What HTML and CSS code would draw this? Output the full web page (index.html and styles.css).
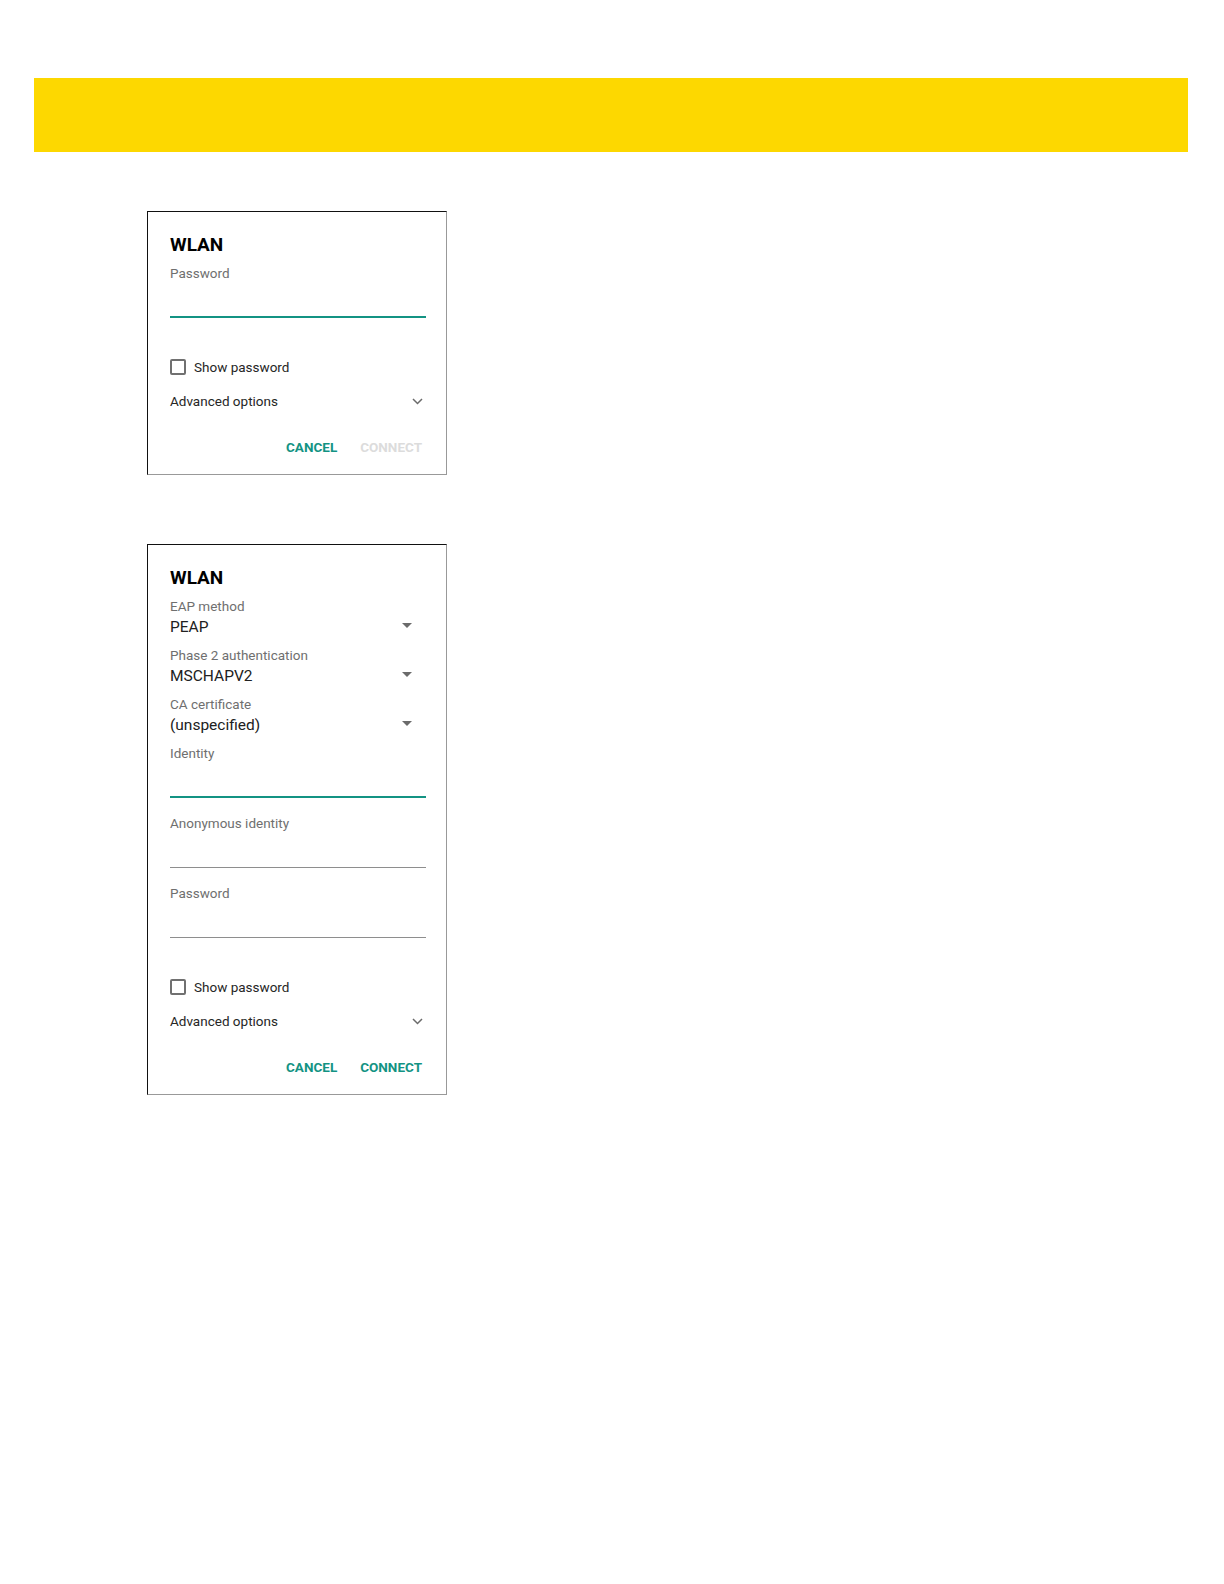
FILE: index.html
```html
<!DOCTYPE html>
<html lang="en">
<head>
  <meta charset="UTF-8">
  <meta name="viewport" content="width=device-width, initial-scale=1.0">
  <title>WLAN</title>
  <link rel="stylesheet" href="styles.css">
</head>
<body>
  <div class="banner"></div>

  <!-- simple password network -->
  <div class="dialog first">
    <div class="title">WLAN</div>
    <div class="field">
      <div class="label">Password</div>
      <div class="input focus"></div>
    </div>
    <div class="check-row">
      <span class="checkbox"></span>
      <span>Show password</span>
    </div>
    <div class="adv-row">
      <span>Advanced options</span>
      <svg class="chevron" width="11" height="7" viewBox="0 0 11 7"><path d="M1 1 L5.5 5.5 L10 1" fill="none" stroke="#6b6b6b" stroke-width="1.5"/></svg>
    </div>
    <div class="actions">
      <span class="btn">CANCEL</span>
      <span class="btn disabled">CONNECT</span>
    </div>
  </div>

  <!-- enterprise network -->
  <div class="dialog">
    <div class="title">WLAN</div>
    <div class="select">
      <div class="label">EAP method</div>
      <div class="value"><span>PEAP</span><svg class="caret" width="10" height="5" viewBox="0 0 10 5"><path d="M0 0 H10 L5 5 Z" fill="#6b6b6b"/></svg></div>
    </div>
    <div class="select">
      <div class="label">Phase 2 authentication</div>
      <div class="value"><span>MSCHAPV2</span><svg class="caret" width="10" height="5" viewBox="0 0 10 5"><path d="M0 0 H10 L5 5 Z" fill="#6b6b6b"/></svg></div>
    </div>
    <div class="select">
      <div class="label">CA certificate</div>
      <div class="value"><span>(unspecified)</span><svg class="caret" width="10" height="5" viewBox="0 0 10 5"><path d="M0 0 H10 L5 5 Z" fill="#6b6b6b"/></svg></div>
    </div>
    <div class="field">
      <div class="label">Identity</div>
      <div class="input focus"></div>
    </div>
    <div class="field">
      <div class="label">Anonymous identity</div>
      <div class="input"></div>
    </div>
    <div class="field">
      <div class="label">Password</div>
      <div class="input"></div>
    </div>
    <div class="check-row">
      <span class="checkbox"></span>
      <span>Show password</span>
    </div>
    <div class="adv-row">
      <span>Advanced options</span>
      <svg class="chevron" width="11" height="7" viewBox="0 0 11 7"><path d="M1 1 L5.5 5.5 L10 1" fill="none" stroke="#6b6b6b" stroke-width="1.5"/></svg>
    </div>
    <div class="actions">
      <span class="btn">CANCEL</span>
      <span class="btn">CONNECT</span>
    </div>
  </div>
</body>
</html>
```

FILE: styles.css
```css
body {
  margin: 0;
  padding-top: 78px;
  font-family: Roboto, "Liberation Sans", sans-serif;
  background: #fff;
  color: #212121;
}
.banner {
  margin-left: 34px;
  width: 1154px;
  height: 74px;
  background: #fdd800;
}
.dialog {
  box-sizing: border-box;
  width: 300px;
  margin: 69px 0 0 147px;
  padding: 21px 20px 17px 22px;
  border: 1px solid #999;
  border-top-color: #111;
  border-left-color: #111;
}
.dialog.first {
  margin-top: 59px;
}
.title {
  font-size: 19px;
  font-weight: bold;
  line-height: 24px;
  color: #000;
  margin-bottom: 6px;
}
.label {
  font-size: 13.5px;
  line-height: 20px;
  color: #6f6f6f;
}
.select {
  margin-bottom: 7px;
}
.value {
  display: flex;
  justify-content: space-between;
  align-items: center;
  font-size: 15.5px;
  line-height: 22px;
  color: #212121;
}
.caret {
  margin-right: 14px;
  margin-bottom: 3px;
}
.field {
  margin-bottom: 15px;
}
.input {
  height: 34px;
  border-bottom: 1px solid #8e8e8e;
}
.input.focus {
  height: 33px;
  border-bottom: 2px solid #139383;
}
/* top margin collapses with the field's 15px below */
.check-row {
  display: flex;
  align-items: center;
  margin-top: 37px;
  margin-bottom: 10px;
  font-size: 13.5px;
  line-height: 24px;
  color: #262626;
}
.checkbox {
  box-sizing: border-box;
  width: 16px;
  height: 16px;
  border: 2px solid #707070;
  border-radius: 2px;
  margin-right: 8px;
}
.adv-row {
  display: flex;
  justify-content: space-between;
  align-items: center;
  font-size: 13.5px;
  line-height: 24px;
  color: #262626;
  margin-bottom: 24px;
}
.chevron {
  margin-right: 3px;
}
.actions {
  display: flex;
  justify-content: flex-end;
  gap: 23px;
  padding-right: 4px;
}
.btn {
  font-size: 13.5px;
  font-weight: bold;
  line-height: 20px;
  color: #139383;
}
.btn.disabled {
  color: #dcdcdc;
}
```
